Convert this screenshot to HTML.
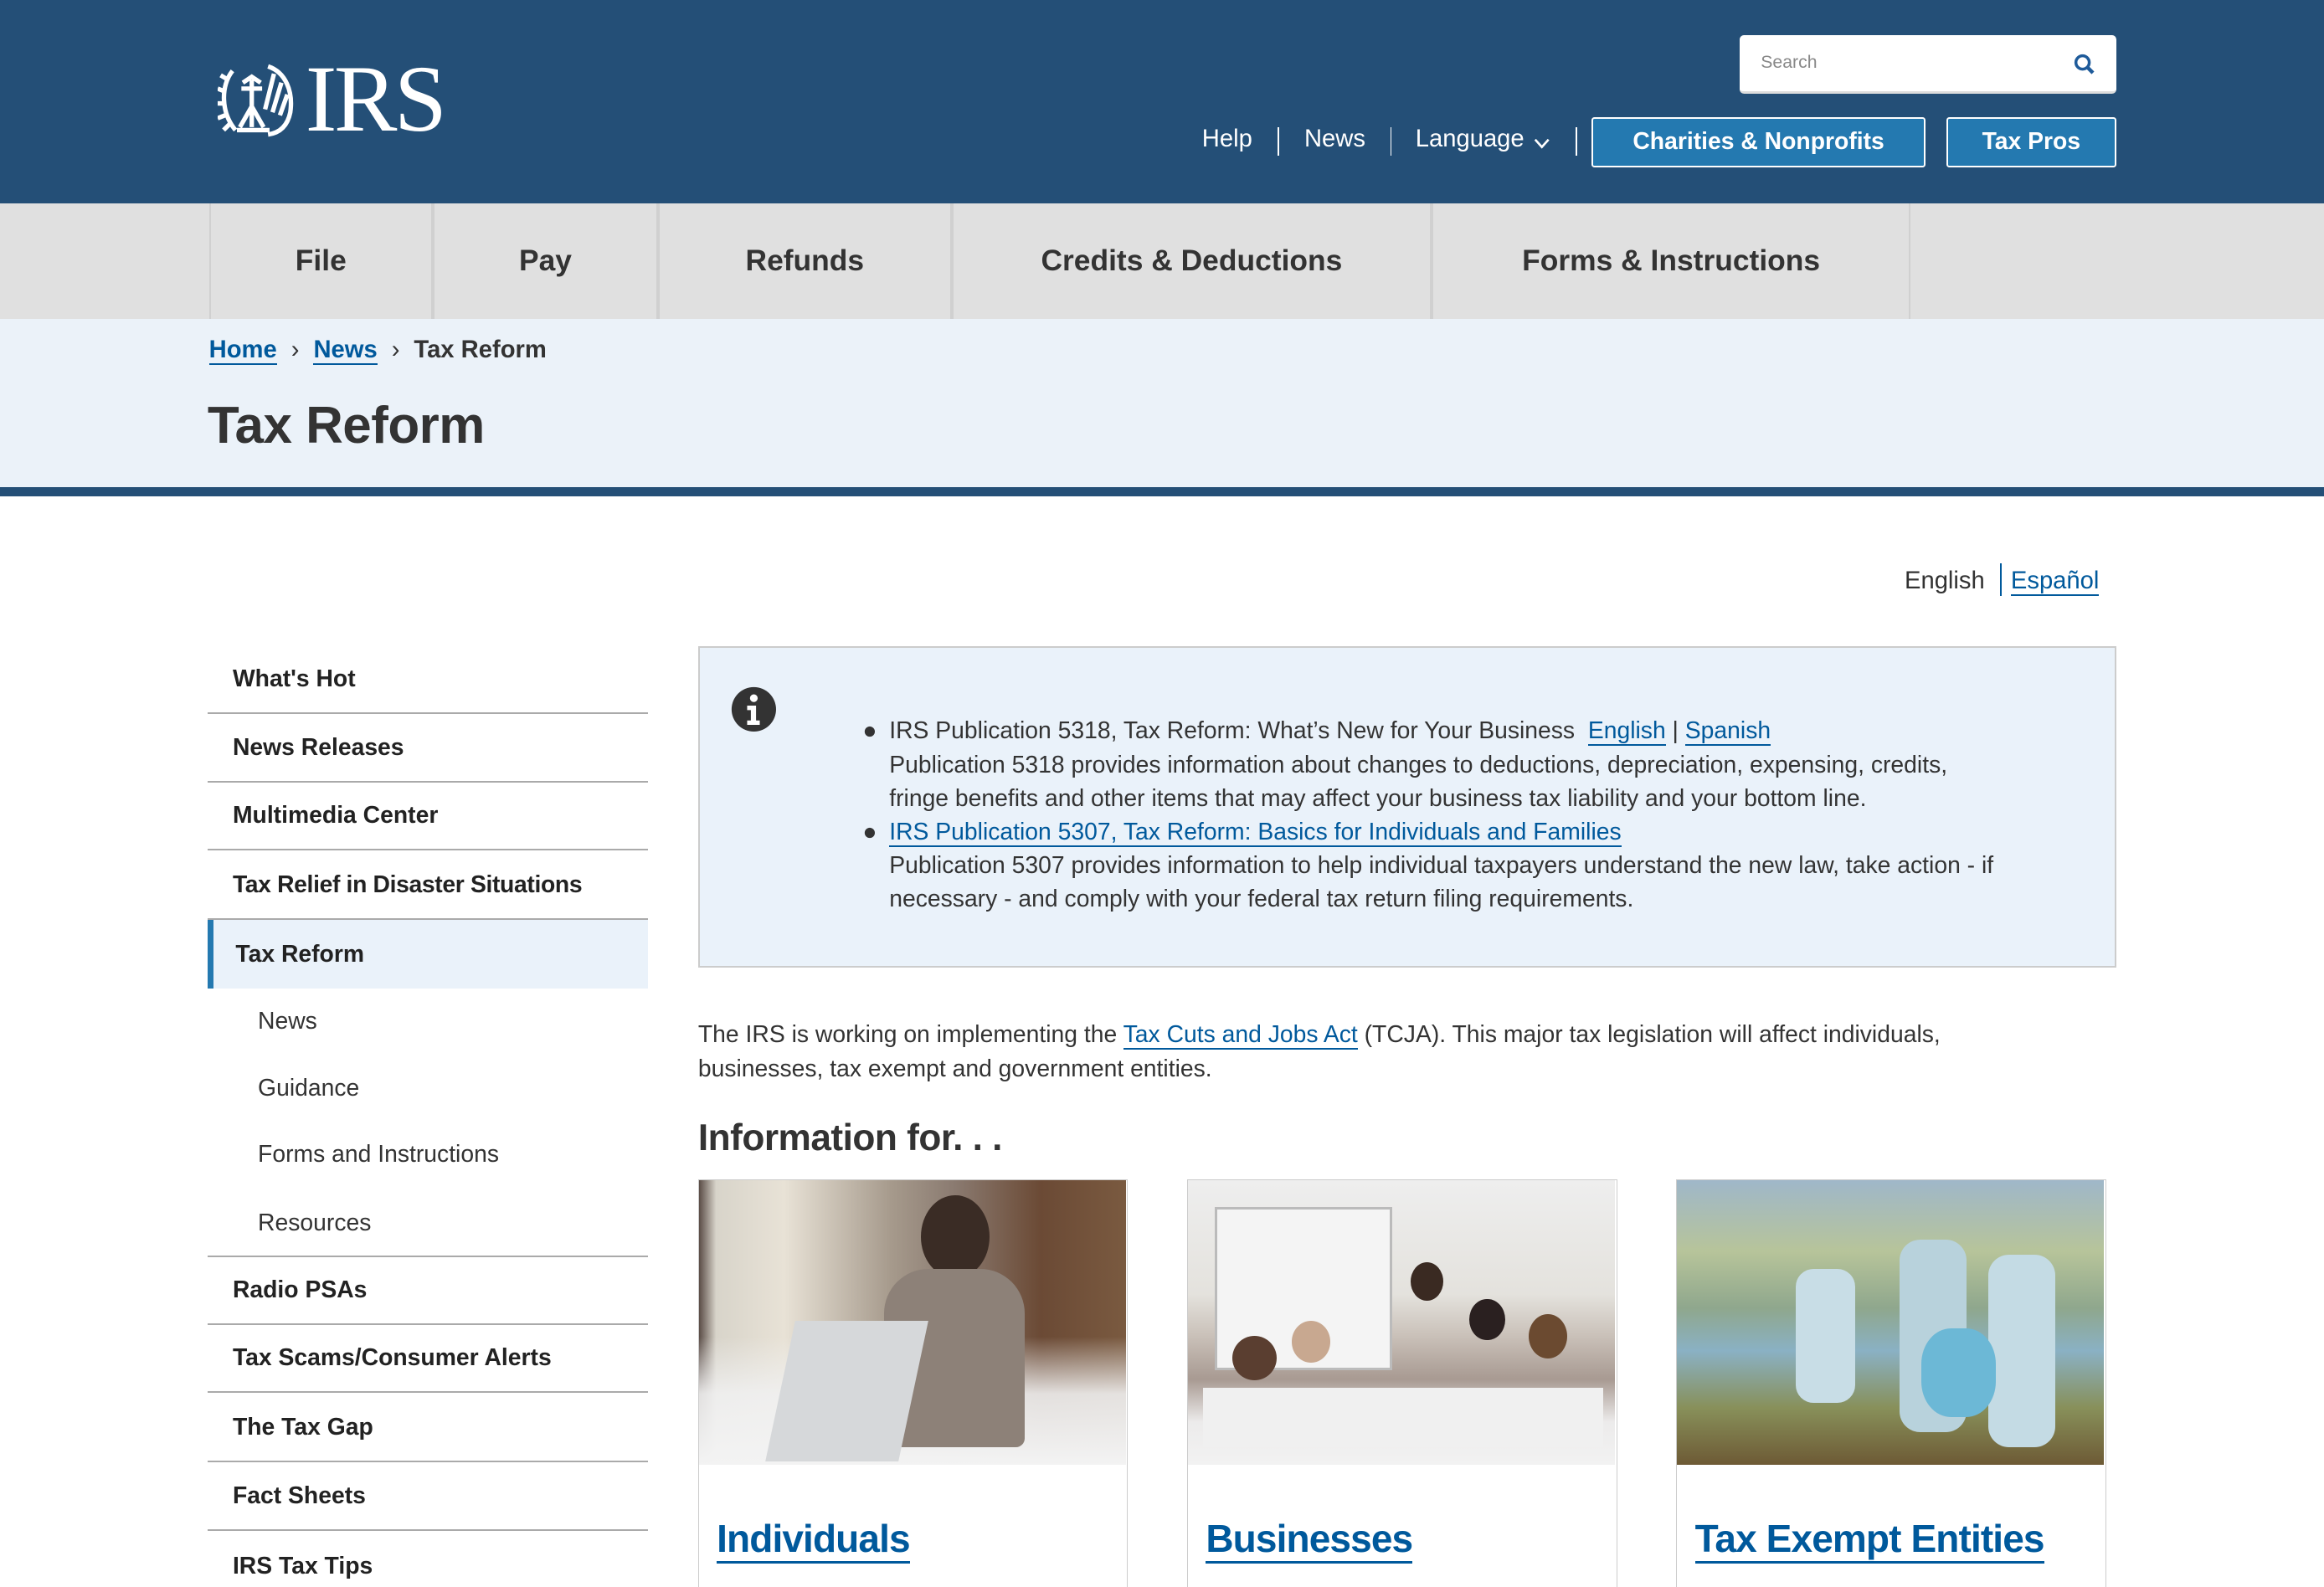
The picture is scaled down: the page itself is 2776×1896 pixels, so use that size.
<!DOCTYPE html>
<html><head><meta charset="utf-8">
<style>
*{margin:0;padding:0;box-sizing:border-box}
html,body{width:2776px;height:1896px;overflow:hidden;background:#fff}
#w{zoom:1.770408;width:1568px;height:1071px;position:relative;font-family:"Liberation Sans",sans-serif;color:#333;overflow:hidden}
.a{position:absolute;white-space:nowrap}
a{color:#00599c;text-decoration:none;border-bottom:1.5px solid #00599c}
.hdr{position:absolute;left:0;top:0;width:1568px;height:137px;background:#244f77}
.nav{position:absolute;left:0;top:137px;width:1568px;height:78px;background:#e0e0e0}
.ni{position:absolute;top:137px;height:78px;border-left:1.5px solid #d0d0d0;border-right:1.5px solid #d0d0d0;font-weight:bold;font-size:20px;color:#333;display:flex;align-items:center;justify-content:center}
.bc{position:absolute;left:0;top:215px;width:1568px;height:114px;background:#ebf2f9}
.side{position:absolute;left:140px;width:297px;font-weight:bold;font-size:16px;color:#222;padding-left:17px;display:flex;align-items:center;height:46px;border-bottom:1.5px solid #aaa}
.sub{position:absolute;left:174px;font-size:16px;color:#333}
.btn{position:absolute;top:79px;height:34px;background:#2479b0;border:1.5px solid #fff;border-radius:2px;color:#fff;font-weight:bold;font-size:16px;display:flex;align-items:center;justify-content:center}
.card{position:absolute;top:796px;width:290px;height:280px;border:1px solid #ccc;overflow:hidden}
.card h3{position:absolute;left:12px;top:227px;font-size:26px;font-weight:bold;color:#00599c;border-bottom:2px solid #00599c;line-height:30px;letter-spacing:-0.5px}
.img{position:absolute;left:0;top:0;width:288px;height:192px}
.p{position:absolute;border-radius:50%}
</style></head><body><div id="w">
<div class="hdr"></div>
<svg class="a" style="left:147px;top:42px" width="56" height="52" viewBox="0 0 56 52">
<g fill="none" stroke="#fff" stroke-width="3">
<path d="M10 6 C2 16 2 34 12 46 M7 12 l-5-3 M5 20 l-5-2 M4 28 l-5 0 M5 36 l-5 2 M8 42 l-4 4"/>
<path d="M34 3 C46 7 51 20 49 34 C47 44 41 48 34 49"/>
<path d="M38 8 l-6 24 M43 14 l-6 20 M47 22 l-5 14"/>
<path d="M23 12 v32 M16 18 h14 M15 44 l8-14 8 14 M13 46 h22 M17 14 l6-4 6 4"/>
</g></svg>
<div class="a" style="left:206px;top:34px;font-family:'Liberation Serif',serif;font-size:64px;color:#fff;line-height:66px;letter-spacing:-2px">IRS</div>
<div class="a" style="left:1174px;top:24px;width:254px;height:39px;background:#fff;border-radius:3px;border-bottom:2px solid #ddd"></div>
<div class="a" style="left:1188px;top:35px;font-size:12px;color:#888">Search</div>
<svg class="a" style="left:1399px;top:36px" width="15" height="15" viewBox="0 0 15 15"><circle cx="6" cy="6" r="4.5" fill="none" stroke="#1f5b9a" stroke-width="2"/><path d="M9.5 9.5 L13 13" stroke="#1f5b9a" stroke-width="2.5"/></svg>
<div class="a" style="left:811px;top:85px;font-size:16.5px;color:#fff">Help</div>
<div class="a" style="left:862px;top:86px;width:1px;height:19px;background:#fff"></div>
<div class="a" style="left:880px;top:85px;font-size:16.5px;color:#fff">News</div>
<div class="a" style="left:938px;top:86px;width:1px;height:19px;background:#fff"></div>
<div class="a" style="left:955px;top:85px;font-size:16.5px;color:#fff">Language</div>
<svg class="a" style="left:1035px;top:93px" width="11" height="8"><path d="M1 1 L5.5 6 L10 1" fill="none" stroke="#fff" stroke-width="1.5"/></svg>
<div class="a" style="left:1063px;top:86px;width:1px;height:19px;background:#fff"></div>
<div class="btn" style="left:1074px;width:225px">Charities &amp; Nonprofits</div>
<div class="btn" style="left:1313px;width:115px">Tax Pros</div>
<div class="nav"></div>
<div class="ni" style="left:141px;width:151px">File</div>
<div class="ni" style="left:292px;width:152px">Pay</div>
<div class="ni" style="left:444px;width:198px">Refunds</div>
<div class="ni" style="left:642px;width:324px">Credits &amp; Deductions</div>
<div class="ni" style="left:966px;width:323px">Forms &amp; Instructions</div>
<div class="bc"></div>
<div class="a" style="left:0;top:329px;width:1568px;height:6px;background:#244f77"></div>
<div class="a" style="left:141px;top:227px;font-size:16.5px;font-weight:bold;color:#333"><a style="color:#00599c">Home</a> <span style="font-weight:normal;margin:0 5px">&#8250;</span> <a style="color:#00599c">News</a> <span style="font-weight:normal;margin:0 5px">&#8250;</span> Tax Reform</div>
<div class="a" style="left:140px;top:267px;font-size:35px;font-weight:bold;color:#333;letter-spacing:-0.3px">Tax Reform</div>
<div class="a" style="left:1285px;top:380px;font-size:16.5px;color:#333">English <span style="display:inline-block;width:1px;height:22px;background:#00599c;vertical-align:-5px;margin:0 6px"></span><a style="color:#00599c">Español</a></div>

<div class="side" style="top:436px">What's Hot</div>
<div class="side" style="top:482px">News Releases</div>
<div class="side" style="top:528px">Multimedia Center</div>
<div class="side" style="top:575px;letter-spacing:-0.2px">Tax Relief in Disaster Situations</div>
<div class="side" style="top:621px;background:#eaf2fa;border-left:4px solid #2479b0;border-bottom:none;padding-left:15px">Tax Reform</div>
<div class="sub" style="top:680px">News</div>
<div class="sub" style="top:725px">Guidance</div>
<div class="sub" style="top:770px">Forms and Instructions</div>
<div class="sub" style="top:816px">Resources</div>
<div class="a" style="left:140px;top:847px;width:297px;height:1.5px;background:#aaa"></div>
<div class="side" style="top:848px">Radio PSAs</div>
<div class="side" style="top:894px">Tax Scams/Consumer Alerts</div>
<div class="side" style="top:941px">The Tax Gap</div>
<div class="side" style="top:987px">Fact Sheets</div>
<div class="side" style="top:1034px;border:none">IRS Tax Tips</div>

<div class="a" style="left:471px;top:436px;width:957px;height:217px;background:#eaf2fa;border:1.5px solid #ccc"></div>
<svg class="a" style="left:493px;top:463px" width="31" height="31" viewBox="0 0 31 31"><circle cx="15.5" cy="15.5" r="15" fill="#333"/><circle cx="15.5" cy="8" r="2.6" fill="#fff"/><path d="M11 13h6v10h2.5v3h-8.5v-3h2.5v-7h-2.5z" fill="#fff"/></svg>
<div class="a" style="left:582px;top:482px;font-size:16px;line-height:22.7px;color:#333">
<div style="position:relative;padding-left:18px"><span style="position:absolute;left:0">&#9679;</span>IRS Publication 5318, Tax Reform: What’s New for Your Business&nbsp; <a>English</a> | <a>Spanish</a><br>Publication 5318 provides information about changes to deductions, depreciation, expensing, credits,<br>fringe benefits and other items that may affect your business tax liability and your bottom line.</div>
<div style="position:relative;padding-left:18px"><span style="position:absolute;left:0">&#9679;</span><a>IRS Publication 5307, Tax Reform: Basics for Individuals and Families</a><br>Publication 5307 provides information to help individual taxpayers understand the new law, take action - if<br>necessary - and comply with your federal tax return filing requirements.</div>
</div>
<div class="a" style="left:471px;top:687px;font-size:16px;line-height:23px;color:#333">The IRS is working on implementing the <a>Tax Cuts and Jobs Act</a> (TCJA). This major tax legislation will affect individuals,<br>businesses, tax exempt and government entities.</div>
<div class="a" style="left:471px;top:754px;font-size:25px;font-weight:bold;color:#333;letter-spacing:-0.3px">Information for. . .</div>

<div class="card" style="left:471px"><div class="img" style="background:linear-gradient(90deg,#5a4c46 0%,#d8d4ca 4%,#e8e2d6 20%,#a69a8c 45%,#8a7a70 60%,#6b4a35 80%,#7a5a40 100%)"></div>
<div class="img" style="background:linear-gradient(180deg,transparent 55%,rgba(240,240,240,.9) 75%,#f3f3f3 100%)"></div>
<div class="p" style="left:150px;top:10px;width:46px;height:56px;background:#3a2c25"></div>
<div class="a" style="left:125px;top:60px;width:95px;height:120px;border-radius:30px 30px 6px 6px;background:#8d8178"></div>
<div class="a" style="left:55px;top:95px;width:90px;height:95px;background:#d6d8da;transform:skewX(-12deg)"></div>
<h3>Individuals</h3></div>
<div class="card" style="left:801px"><div class="img" style="background:linear-gradient(180deg,#eeeeee 0%,#e4e2dd 40%,#c9c0b8 55%,#a89a92 70%,#ecebeb 85%,#f2f2f2 100%)"></div>
<div class="a" style="left:18px;top:18px;width:120px;height:110px;background:#f4f4f4;border:2px solid #bbb"></div>
<div class="p" style="left:30px;top:105px;width:30px;height:30px;background:#5a3e30"></div>
<div class="p" style="left:70px;top:95px;width:26px;height:28px;background:#c8a890"></div>
<div class="p" style="left:150px;top:55px;width:22px;height:26px;background:#3a2a22"></div>
<div class="p" style="left:190px;top:80px;width:24px;height:28px;background:#2a2020"></div>
<div class="p" style="left:230px;top:90px;width:26px;height:30px;background:#6b4a30"></div>
<div class="a" style="left:10px;top:140px;width:270px;height:40px;background:#f0f0f0"></div>
<h3>Businesses</h3></div>
<div class="card" style="left:1131px"><div class="img" style="background:linear-gradient(180deg,#9fb7c9 0%,#b7c49a 25%,#8fa78d 45%,#8ab1c4 60%,#88905a 80%,#6d5a35 100%)"></div>
<div class="a" style="left:80px;top:60px;width:40px;height:90px;border-radius:12px;background:#c8dde6"></div>
<div class="a" style="left:150px;top:40px;width:45px;height:130px;border-radius:14px;background:#b8d2dc"></div>
<div class="a" style="left:210px;top:50px;width:45px;height:130px;border-radius:14px;background:#c4dbe4"></div>
<div class="a" style="left:165px;top:100px;width:50px;height:60px;border-radius:40%;background:#6cb8d6"></div>
<h3>Tax Exempt Entities</h3></div>
</div></body></html>
